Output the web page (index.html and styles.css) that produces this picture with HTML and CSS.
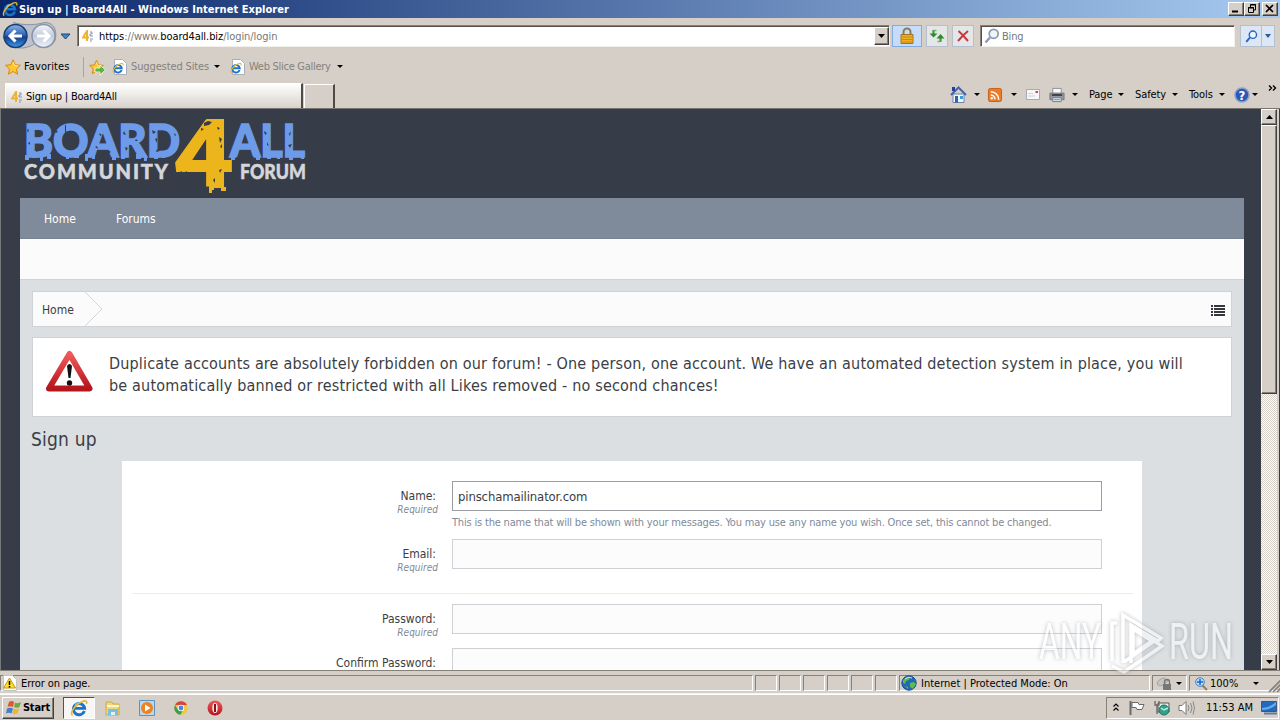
FILE: index.html
```html
<!DOCTYPE html>
<html lang="en">
	<head>
		<meta charset="utf-8">
		<title>Sign up | Board4All</title>
		<link rel="stylesheet" href="styles.css">
	</head>

	<body>
		<svg class="defs" width="0" height="0">
			<defs>
				<linearGradient id="blueBall" x1="0" y1="0" x2="0" y2="1">
					<stop offset="0" stop-color="#8fb4e4"/>
					<stop offset=".45" stop-color="#2f64b4"/>
					<stop offset=".55" stop-color="#123f8e"/>
					<stop offset="1" stop-color="#3f9be8"/>
				</linearGradient>
				<linearGradient id="greyBall" x1="0" y1="0" x2="0" y2="1">
					<stop offset="0" stop-color="#f4f6fa"/>
					<stop offset=".5" stop-color="#c3cbdb"/>
					<stop offset="1" stop-color="#eef3fb"/>
				</linearGradient>
				<linearGradient id="red" x1="0" y1="0" x2="0" y2="1">
					<stop offset="0" stop-color="#f0595c"/>
					<stop offset="1" stop-color="#b3161c"/>
				</linearGradient>
			</defs>
			<symbol id="ie" viewBox="0 0 16 16">
				<path d="M12.8 10.6A5 5 0 1 1 13 8.3H4" fill="none" stroke="#1c74c9" stroke-width="2.6"/>
				<path d="M4.5 6A4 4 0 0 1 9 3.6" fill="none" stroke="#6fc5f5" stroke-width="1.2"/>
				<path d="M2.2 14.6C-.8 12 5.500 4.400 11 2.200c3-1.200 4.500-.4 3.600 2.300" fill="none" stroke="#e9b62c" stroke-width="1.400"/>
			</symbol>
			<symbol id="iepage" viewBox="0 0 16 16">
				<path d="M2.500.5h8l4 4v11h-12z" fill="#fff" stroke="#a9aeb8"/>
				<use href="#ie" x="0" y="3" width="12" height="12"/>
			</symbol>
			<symbol id="star" viewBox="0 0 16 16">
				<path d="M8 .8l2.200 4.900 5.200.6-3.900 3.600 1.100 5.300L8 12.500l-4.600 2.700 1.100-5.300L.6 6.300l5.200-.6z" fill="#fdc62f" stroke="#d98a12"/>
				<path d="M8 3l1.400 3.600 3.600.5" fill="none" stroke="#fff0a0"/>
			</symbol>
			<symbol id="fav4" viewBox="0 0 12 12">
				<path d="M5 11V1L1 7.500h6" fill="none" stroke="#efb42c" stroke-width="2"/>
				<path d="M8 2h2v2H8v2h3M8 9h3M8 11h2" fill="none" stroke="#8393b8"/>
			</symbol>
			<symbol id="lens" viewBox="0 0 16 16">
				<path d="M1.500 14.500L6 9.500" stroke="currentColor" stroke-width="2.400"/>
				<circle cx="9.700" cy="5.800" r="4.500" fill="#eef6fd" stroke="currentColor" stroke-width="1.700"/>
			</symbol>
		</svg>

		<header class="titlebar">
			<svg width="16" height="16"><use href="#ie"/></svg>
			<span class="window-title">Sign up | Board4All - Windows Internet Explorer</span>
			<div class="window-buttons">
				<i class="raised"><svg width="14" height="12"><path d="M3 8.500h6" stroke="#000" stroke-width="2"/></svg></i>
				<i class="raised"><svg width="14" height="12"><path d="M5.500 4V1.500h5V7H8M5 2h6M3.500 4.500h5v5h-5zM3 5h6" fill="none" stroke="#000"/></svg></i>
				<i class="raised close"><svg width="14" height="12"><path d="M3 2l7 7M10 2L3 9" stroke="#000" stroke-width="1.700"/></svg></i>
			</div>
		</header>

		<nav class="navbar">
			<svg class="travel" width="76" height="32">
				<path d="M13 2.500Q29 7 45 2.500c11 0 12 11 10 18-5 9-15 8-18 1-8 9-29 10-34-5" fill="#bcc3ce" stroke="#8b93a2"/>
				<circle cx="15.500" cy="16" r="11.500" fill="url(#blueBall)" stroke="#183d78" stroke-width="1.500"/>
				<path d="M22 16H11M15.500 10.500L10 16l5.500 5.500" fill="none" stroke="#fff" stroke-width="3"/>
				<circle cx="43.500" cy="16" r="11.500" fill="url(#greyBall)" stroke="#8994ac" stroke-width="1.500"/>
				<path d="M37 16h11M43.500 10.500L49 16l-5.500 5.500" fill="none" stroke="#fff" stroke-width="3"/>
				<path d="M61 14h9l-4.500 5z" fill="#3d86c4" stroke="#17487c"/>
			</svg>
			<div class="address sunken">
				<svg width="12" height="12"><use href="#fav4"/></svg>
				<span class="url"><b>https</b>://www.<b>board4all.biz</b>/login/login</span>
				<i class="raised drop"><svg width="7" height="4"><path d="M0 0h7L3.500 4z"/></svg></i>
			</div>
			<i class="tool lock">
				<svg width="16" height="18"><path d="M4.500 8V5a3.500 3.500 0 0 1 7 0v3" fill="none" stroke="#8b7c55" stroke-width="2"/><path d="M2 7.500h12v9H2z" fill="#efae26" stroke="#a97413"/><path d="M3 10h10M3 12.500h10M3 15h10" stroke="#c98a1a"/></svg>
			</i>
			<i class="tool refresh">
				<svg width="16" height="16"><path d="M4.500 2v5M11.500 14V9" fill="none" stroke="#3e9a3a" stroke-width="2.200"/><path d="M4.500 2.500h3M11.500 13.500h-3" stroke="#6db868" stroke-width="1.500"/><path d="M.5 5.500h8L4.500 9.500zM7.500 10.500h8L11.500 6z" fill="#2f8a2e"/></svg>
			</i>
			<i class="tool stop">
				<svg width="14" height="14"><path d="M2.500 2Q7 6 12 12M12 2Q7 6 2 12" fill="none" stroke="#c8393f" stroke-width="2"/></svg>
			</i>
			<div class="search sunken">
				<svg width="16" height="16" color="#8f9aab"><use href="#lens"/></svg>
				<span>Bing</span>
			</div>
			<i class="tool go"><svg width="13" height="13" color="#2264cc"><use href="#lens"/></svg></i>
			<i class="tool more"><svg width="6" height="4"><path d="M0 0h6L3 4z" fill="#235f9f"/></svg></i>
		</nav>

		<nav class="favbar">
			<svg width="16" height="16"><use href="#star"/></svg>
			<span class="favorites">Favorites</span>
			<svg width="17" height="16"><use href="#star" width="15"/><path d="M6 9h5V6l5.500 5-5.500 5v-3H6z" fill="#58b540" stroke="#fff" stroke-width=".8"/></svg>
			<svg class="page-icon" width="16" height="16"><use href="#iepage"/></svg>
			<span class="suggested">Suggested Sites</span>
			<i class="arrow"></i>
			<svg class="page-icon slice" width="16" height="16"><use href="#iepage"/></svg>
			<span class="gallery">Web Slice Gallery</span>
			<i class="arrow"></i>
		</nav>

		<div class="tabrow">
			<div class="tab">
				<svg width="12" height="12"><use href="#fav4"/></svg>
				<span>Sign up | Board4All</span>
			</div>
			<div class="newtab"></div>
			<div class="commands">
				<svg class="home" width="17" height="17"><path d="M3 8h11v8.500H3z" fill="#f4f7fd" stroke="#6f83a9"/><path d="M1 9l7.500-7.500L16 9" fill="none" stroke="#4964a6" stroke-width="2"/><path d="M2 1h3v4H2z" fill="#2a3e99"/><path d="M5 10h3v6.500H5z" fill="#2a65ae"/><path d="M10 10h3v3h-3z" fill="#3c9be0"/></svg>
				<i class="arrow"></i>
				<svg class="feed" width="14" height="14" viewBox="0 0 15 15"><rect x=".5" y=".5" width="14" height="14" rx="2" fill="#ee7c26" stroke="#c55b16"/><path d="M3 7.500a5 5 0 0 1 4.500 4.500M3 4a8.500 8.500 0 0 1 8.500 8.500" fill="none" stroke="#fff" stroke-width="1.600"/><circle cx="4" cy="11" r="1.300" fill="#fff"/></svg>
				<i class="arrow"></i>
				<svg class="mail" width="14" height="11"><path d="M.5.5h13v10H.5z" fill="#f7f7fa" stroke="#a7a9b4"/><path d="M2 4.500h5M2 7h7" stroke="#d0d2da"/><path d="M9.500 2h2.500v2h-2.500z" fill="#d3424f"/></svg>
				<svg class="print" width="16" height="16" viewBox="0 0 17 16"><path d="M4 1h9v6H4z" fill="#f8f8f8" stroke="#8a8d92"/><path d="M1 6h15v7H1z" fill="#9299a2" stroke="#70767f"/><path d="M3 8h11" stroke="#3c4148" stroke-width="2"/><path d="M4 11h9v4H4z" fill="#e8eef1" stroke="#747a82"/><path d="M5 13h7" stroke="#5d9b8d"/></svg>
				<i class="arrow"></i>
				<span class="page">Page</span><i class="arrow"></i>
				<span class="safety">Safety</span><i class="arrow"></i>
				<span class="tools">Tools</span><i class="arrow"></i>
				<svg class="help" width="16" height="16"><circle cx="8" cy="8" r="7" fill="#2c58bb" stroke="#8f9fc4" stroke-width="1.500"/><text x="8" y="12.500" class="qmark">?</text></svg>
				<i class="arrow"></i>
				<svg class="chevrons" width="9" height="6"><path d="M1 .5L3.500 3 1 5.500M5 .5L7.500 3 5 5.500" fill="none" stroke="#000" stroke-width="1.400"/></svg>
			</div>
		</div>

		<div class="viewport">
			<main class="site">
				<svg class="logo" width="300" height="89">
					<g class="logo-blue">
						<text x="4" y="48" textLength="156" lengthAdjust="spacingAndGlyphs">BOARD</text>
						<text x="210" y="48" textLength="75" lengthAdjust="spacingAndGlyphs">ALL</text>
						<path d="M5 46h4v5H5zM12 46h5v3h-5zM20 46h3v6h-3zM27 45h4v5h-4zM46 45h3v5h-3zM54 46h5v3h-5zM65 45h3v7h-3zM72 45h3v5h-3zM92 45h4v6h-4zM101 46h4v4h-4zM116 45h5v5h-5zM124 46h3v6h-3zM134 45h4v5h-4zM142 46h3v3h-3zM211 45h4v6h-4zM236 45h4v6h-4zM247 46h4v4h-4zM257 45h3v5h-3zM269 46h4v5h-4zM281 46h3v4h-3z"/>
					</g>
					<g class="logo-grey">
						<text x="4" y="69.500" textLength="144" lengthAdjust="spacing">COMMUNITY</text>
						<text x="220" y="69.500" textLength="66" lengthAdjust="spacingAndGlyphs">FORUM</text>
					</g>
					<g class="logo-four">
						<text x="152" y="77" textLength="63" lengthAdjust="spacingAndGlyphs">4</text>
						<path d="M189 75h5v6h-2v3h-3zM193 76h11v3h-11zM201 78h5v4h-5z"/>
					</g>
					<path class="scratches" d="M7 20l2 1-1 3zM15 24l3 1-2 3zM8 34l2-1v3zM17 40l2 2-3 1zM36 21l2 2-3 1zM45 16h1v8h-1zM79 24l3 2-2 1zM75 38l2-1 1 3zM88 41l3 2-2 1zM104 22l2 4-3-1zM105 38l3 1-2 3zM116 30l2 2h-3zM132 21l4 2-3 2zM135 30l2-1v5zM137 40l3 2-4 1zM155 24l1 3-2-1zM223 30l3 1-2 2zM228 41l2 1-2 2zM244 22l3 2-2 2zM247 33l2 4-2-1zM267 22l2 3 2-3-1 5zM268 36l4-1-2 4zM184 14l4-2 4 1-3 3-5 1zM181 19l3 1-3 2zM199 28l3 2-2 4zM200 38l2-3v4zM158 64l4-2-1 4zM166 62l4 3-5 1zM177 65l3 2h-3zM199 61l3-1-2 4zM193 71l2-2v5zM197 18l3 1-2 2z"/>
				</svg>

				<nav class="menu">
					<a>Home</a>
					<a>Forums</a>
				</nav>
				<div class="submenu"></div>

				<div class="content">
					<div class="breadcrumb">
						<span>Home</span>
						<svg class="crumb-arrow" width="19" height="34"><path d="M1 0l17 17L1 34" fill="none" stroke="#d2d5d9"/></svg>
						<svg class="list-icon" width="14" height="11"><path d="M0 1h2M3 1h11M0 4h2M3 4h11M0 7h2M3 7h11M0 10h2M3 10h11" stroke="#34373d" stroke-width="2"/></svg>
					</div>

					<div class="notice">
						<svg width="50" height="44"><path d="M24.500 4L44.500 38.500H4z" fill="#fff" stroke="url(#red)" stroke-width="6" stroke-linejoin="round"/><path d="M22 16q2.500-4 5 0l-1.500 12h-2z" fill="#111"/><circle cx="24.500" cy="33" r="2.700" fill="#111"/></svg>
						<p><span>Duplicate accounts are absolutely forbidden on our forum! - One person, one account. We have an automated detection system in place, you will</span><span class="second">be automatically banned or restricted with all Likes removed - no second chances!</span></p>
					</div>

					<h1>Sign up</h1>

					<form class="signup">
						<div class="row name">
							<label><span>Name:</span><em>Required</em></label>
							<div>
								<div class="field focused">pinschamailinator.com</div>
								<p>This is the name that will be shown with your messages. You may use any name you wish. Once set, this cannot be changed.</p>
							</div>
						</div>
						<div class="row email">
							<label><span>Email:</span><em>Required</em></label>
							<div class="field"></div>
						</div>
						<hr>
						<div class="row password">
							<label><span>Password:</span><em>Required</em></label>
							<div class="field"></div>
						</div>
						<div class="row confirm">
							<label><span>Confirm Password:</span></label>
							<div class="field"></div>
						</div>
					</form>
				</div>
			</main>

			<div class="scrollbar">
				<i class="raised"><svg width="7" height="4"><path d="M0 4h7L3.500 0z"/></svg></i>
				<i class="raised thumb"></i>
				<i class="raised bottom"><svg width="7" height="4"><path d="M0 0h7L3.500 4z"/></svg></i>
			</div>
		</div>

		<footer class="status">
			<div class="pane message">
				<svg width="16" height="16"><path d="M1.500.5h9l4 4v11h-13z" fill="#fff" stroke="#c4c4c4"/><path d="M7.500 3l6 10h-12z" fill="#ffdf27" stroke="#c09a10"/><path d="M7.500 6v4M7.500 11v1.500" stroke="#000" stroke-width="1.500"/></svg>
				<span>Error on page.</span>
			</div>
			<div class="pane"></div><div class="pane"></div><div class="pane"></div>
			<div class="pane"></div><div class="pane"></div><div class="pane"></div>
			<div class="pane zone">
				<svg width="16" height="16"><circle cx="8" cy="8" r="7.200" fill="#2367b5" stroke="#1d4d88"/><path d="M2 5q4-4 7-3l-1 3-3 1-1 3-2-1zM9 8l4-1 2 2-3 5-3-2zM4 11l3 1v2z" fill="#58be4d"/><path d="M4 4q3-3 7-1" fill="none" stroke="#c6eafa"/></svg>
				<span>Internet | Protected Mode: On</span>
			</div>
			<div class="pane privacy">
				<svg width="16" height="16"><path d="M1 9q1-5 7-6l4 3-5 4-3 1z" fill="#c6c6c6" stroke="#a4a4a4"/><path d="M8.500 9V7a2.500 2.500 0 0 1 5 0v2" fill="none" stroke="#777" stroke-width="1.400"/><path d="M7 9h8v6H7z" fill="#777"/></svg>
				<i class="arrow"></i>
			</div>
			<div class="pane zoom">
				<svg width="13" height="13"><path d="M7 8l5 5" stroke="#9b7a58" stroke-width="2"/><circle cx="5" cy="5" r="4.300" fill="#b8defa" stroke="#3b83cc"/><path d="M5 2v6M2 5h6" stroke="#1865c1" stroke-width="1.500"/></svg>
				<span>100%</span>
				<i class="arrow"></i>
				<svg class="grip" width="12" height="12"><path d="M0 12L12 0M4 12l8-8M8 12l4-4" stroke="#858078" stroke-width="1.700"/></svg>
			</div>
		</footer>

		<footer class="taskbar">
			<div class="raised start">
				<svg width="16" height="16"><path d="M3 2q3-2 5 0L7 7Q4 5.500 1.500 7z" fill="#e0562f"/><path d="M9 2.500q3 1.500 6-.5l-1.500 5Q11 8.500 8 7z" fill="#69ad3e"/><path d="M1 8.500q3-1.500 6 0l-1.500 5Q3 12 0 13.500z" fill="#3d82cf"/><path d="M7.500 8.500q3 1.500 5.500 0l-1.500 5q-3 1.500-5 0z" fill="#f1b52a"/></svg>
				<b>Start</b>
			</div>
			<div class="active"><svg width="18" height="18"><use href="#ie"/></svg></div>
			<svg class="explorer" width="16" height="16"><path d="M1 2h6l1 2h6v11H1z" fill="#f2d67b" stroke="#c8a94c"/><path d="M2 6h12" stroke="#fff6c5" stroke-width="2"/><path d="M3 9h10v6H3z" fill="#78bfe5"/><path d="M6 12h4v3H6z" fill="#e9eef1"/></svg>
			<svg class="player" width="16" height="16"><path d="M.5.5h15v15H.5z" fill="#b9d8ee" stroke="#5b93c3"/><circle cx="8" cy="8" r="6" fill="#ee8121"/><path d="M6 4.500l5.500 3.500L6 11.500z" fill="#fff"/></svg>
			<svg class="chrome" width="14" height="14"><circle cx="7" cy="7" r="6.700" fill="#f1ca38"/><path d="M1 4a6.700 6.700 0 0 1 12 0H7z" fill="#d84437"/><path d="M1 4a6.700 6.700 0 0 0 5.500 9.700L9 9H4z" fill="#3e9e4d"/><circle cx="7" cy="7" r="3.200" fill="#fff"/><circle cx="7" cy="7" r="2.400" fill="#4b86d8"/></svg>
			<svg class="opera" width="16" height="16"><circle cx="8" cy="8" r="7.500" fill="url(#red)"/><ellipse cx="8" cy="8" rx="2.700" ry="5" fill="#f9eaea"/><path d="M8 4v8" stroke="#8c1015" stroke-width="2"/></svg>
			<div class="tray">
				<svg class="up" width="6" height="9"><path d="M.5 3.500L3 1l2.500 2.500M.5 7.500L3 5l2.500 2.500" fill="none" stroke="#000" stroke-width="1.200"/></svg>
				<svg class="flag" width="16" height="16"><path d="M1.500 1v14" stroke="#696969" stroke-width="2"/><path d="M3 2.500h6l1 2h5l-2 5H8l-1-2H3z" fill="#fff" stroke="#696969"/></svg>
				<svg class="network" width="16" height="16"><path d="M4 3h11v9H4z" fill="#e4eeec" stroke="#555"/><path d="M1 1v4h4V1M3 5v9" fill="none" stroke="#666" stroke-width="1.300"/><circle cx="10" cy="10" r="5" fill="#31a389" stroke="#27705f"/><path d="M7 8l3 2 4-2" fill="none" stroke="#bde9df" stroke-width="1.500"/></svg>
				<svg class="sound" width="17" height="16"><path d="M1 5.500h3l4-4v13l-4-4H1z" fill="#fff" stroke="#777"/><path d="M10 5q2 3 0 6M12.500 3q3 5 0 10M15 1.500q3 6 0 13" fill="none" stroke="#888"/></svg>
				<span class="clock">11:53 AM</span>
				<svg class="desktop" width="16" height="14"><path d="M.5.5h15v10H.5z" fill="#226ac1" stroke="#42567a"/><path d="M1 7Q8 7 15 1v3q-6 5-14 5z" fill="#62acea"/><path d="M3 12.500h13" stroke="#677b95" stroke-width="2"/></svg>
			</div>
		</footer>

		<div class="watermark">
			<svg width="210" height="72">
				<text x="9" y="55" textLength="62" lengthAdjust="spacingAndGlyphs">ANY</text>
				<path d="M82 57V19h5M93 59V11l38 23-3 3-27-16v38M82 62l12 6 38-26-8-5-30 21M103 25l19 12-19 13z" fill="none" stroke="#fff" stroke-width="3.500"/>
				<text x="139" y="55" textLength="64" lengthAdjust="spacingAndGlyphs">RUN</text>
			</svg>
		</div>
	</body>
</html>
```
FILE: styles.css
```css
* {
	box-sizing: border-box;
}

body {
	display: flex;
	flex-direction: column;
	width: 1280px;
	height: 720px;
	margin: 0;
	overflow: hidden;
	background: #d6cfc7;
	color: #000;
	font-family: "DejaVu Sans Condensed", "DejaVu Sans", sans-serif;
	font-stretch: condensed;
	font-size: 11px;
	line-height: 14px;
	white-space: nowrap;
}

svg {
	display: block;
	flex: none;
	overflow: visible;
}

p, h1 {
	margin: 0;
	font-weight: normal;
}

.defs {
	position: absolute;
}

.raised {
	display: flex;
	flex: none;
	align-items: center;
	justify-content: center;
	border: 1px solid #fff;
	border-right-color: #404040;
	border-bottom-color: #404040;
	background: #d6cfc7;
	box-shadow: inset -1px -1px #858078;
}

.sunken {
	display: flex;
	align-items: center;
	border: 1px solid #858078;
	border-right-color: #f3f0ec;
	border-bottom-color: #f3f0ec;
	box-shadow: inset 1px 1px #55524e;
	background: #fff;
}

.arrow {
	flex: none;
	width: 0;
	height: 0;
	border: 3px solid transparent;
	border-top-color: #000;
	border-bottom: 0;
}

/* browser chrome */

.titlebar {
	display: flex;
	flex: none;
	align-items: center;
	height: 18px;
	padding: 0 2px 0 2px;
	background: linear-gradient(90deg, #0a2669, #a6caf0);
	color: #fff;
}

.window-title {
	margin: 1px 0 0 1px;
	font-weight: bold;
	letter-spacing: 0.05px;
}

.window-buttons {
	display: flex;
	margin-left: auto;

	& .raised { width: 16px; height: 14px; }
	& .close { margin-left: 2px; }
}

.navbar {
	display: flex;
	flex: none;
	align-items: center;
	height: 35px;
	border-top: 1px solid #d6cfc7;
}

.travel { margin-top: -1px; }

.address {
	width: 813px;
	height: 22px;
	margin-left: 1px;
	padding-left: 4px;

	& .drop { width: 15px; height: 18px; margin-left: auto; }
}

.url {
	margin: 1px 0 0 5px;
	color: #777;
	letter-spacing: -0.06px;

	& b { color: #000; font-weight: normal; }
}

.tool {
	display: flex;
	align-items: center;
	justify-content: center;
	height: 22px;
	border: 1px solid #b6bfcd;
	background: #e5e6e8;
}

.lock { width: 30px; margin-left: 2px; border-color: #82abe0; background: #c6dcf8; }
.refresh { width: 22px; margin-left: 4px; }
.stop { width: 22px; margin-left: 4px; }
.go { width: 22px; margin-left: 5px; background: #dce6f4; }
.more { width: 13px; border-left: 0; background: #dce6f4; }

.search {
	width: 255px;
	height: 22px;
	margin-left: 6px;
	padding-left: 3px;
	color: #777;

	& span { margin: 1px 0 0 2px; letter-spacing: -0.2px; }
}

.favbar {
	display: flex;
	flex: none;
	align-items: center;
	height: 27px;
	padding-left: 5px;
	color: #85817c;
}

.favorites {
	width: 60px;
	height: 20px;
	margin: 0 5px 0 3px;
	border-right: 1px solid #aaa59e;
	color: #000;
	letter-spacing: 0.1px;
	line-height: 19px;
}

.page-icon { margin-left: 6px; }
.slice { margin-left: 10px; }
.suggested { width: 79px; margin: 1px 4px 0 3px; letter-spacing: -0.12px; }
.gallery { width: 84px; margin: 1px 4px 0 3px; letter-spacing: -0.28px; }

.tabrow {
	display: flex;
	flex: none;
	height: 29px;
	padding-left: 5px;
	border-bottom: 1px solid #77746f;
}

.tab {
	display: flex;
	align-items: center;
	width: 298px;
	height: 25px;
	margin-top: 3px;
	padding: 1px 0 0 5px;
	border-top: 1px solid #fff;
	border-left: 1px solid #fff;
	border-right: 2px solid #4d4a47;
	background: linear-gradient(#fff, #d8d2cb);

	& span { margin-left: 3px; letter-spacing: -0.2px; }
}

.newtab {
	width: 31px;
	height: 24px;
	margin: 4px 0 0 1px;
	border: 1px solid #fff;
	border-right: 2px solid #4d4a47;
	border-bottom: 0;
}

.commands {
	display: flex;
	align-items: center;
	margin-left: 615px;
	padding-top: 1px;

	& span { margin-right: 4px; letter-spacing: -0.1px; }
}

.home { margin-right: 7px; }
.feed { margin: 0 9px 0 8px; }
.mail { margin: 0 9px; }
.print { margin-right: 7px; }
.page { width: 25px; margin-left: 11px; }
.safety { width: 33px; margin-left: 11px; }
.tools { width: 26px; margin-left: 11px; }
.help { margin: 0 2px 0 9px; }
.chevrons { margin: -13px 0 0 10px; }

.qmark {
	fill: #fff;
	font-size: 13px;
	font-weight: bold;
	text-anchor: middle;
}

/* page */

.viewport {
	display: flex;
	flex: none;
	height: 561px;
	border-left: 1px solid #747a7a;
	background: #373d48;
	overflow: hidden;
}

.site {
	width: 1224px;
	margin-left: 19px;
	font-size: 13px;
	line-height: 16px;
}

.logo-blue {
	fill: #6d9bea;
	stroke: #6d9bea;
	stroke-width: 1.6px;
	font: 900 45px Lato, sans-serif;

	& path { stroke: none; }
}

.logo-grey {
	fill: #d4d6da;
	stroke: #d4d6da;
	stroke-width: 0.5px;
	font: 900 20px Lato, sans-serif;
}

.logo-four {
	fill: #edb51c;
	font: 900 95px Roboto, sans-serif;
}

.scratches { fill: #373d48; }

.menu {
	display: flex;
	gap: 40px;
	height: 41px;
	padding: 13px 24px;
	border-bottom: 1px solid #778190;
	background: #7f8a9a;
	color: #fff;
	font-size: 12px;
}

.submenu {
	height: 41px;
	border-bottom: 1px solid #cfd3d6;
	background: #fbfbfb;
}

.content {
	height: 391px;
	padding: 11px 12px 0;
	background: #dbdfe2;
	color: #3b3e45;
}

.breadcrumb {
	display: flex;
	align-items: center;
	height: 36px;
	padding: 0 6px 0 9px;
	border: 1px solid #cfd3d6;
	background: #fbfbfb;

	& span { width: 33px; margin-top: 2px; font-size: 12px; }
}

.crumb-arrow { margin-left: 9px; }
.list-icon { margin: 3px 0 0 auto; }

.notice {
	display: flex;
	height: 80px;
	margin-top: 10px;
	padding: 12px 0 0 12px;
	border: 1px solid #cfd3d6;
	background: #fff;
	font-size: 16px;
	line-height: 22px;
	letter-spacing: 0.174px;

	& p { margin: 3px 0 0 14px; }
	& span { display: block; }
}

h1 {
	margin: 10px 0 10px -1px;
	font-size: 19px;
	letter-spacing: 0.2px;
	line-height: 24px;
}

.signup {
	width: 1020px;
	height: 230px;
	margin-left: 90px;
	padding: 20px 40px 0 0;
	background: #fff;

	& hr {
		height: 1px;
		margin: 0 -31px 10px 10px;
		border: 0;
		background: #ebedef;
	}
}

.row {
	display: flex;
	justify-content: flex-end;

	& label {
		display: flex;
		flex-direction: column;
		align-items: flex-end;
		padding-top: 8px;
		margin-right: 14px;
		font-size: 12px;
		line-height: 15px;
	}

	& label span { margin-right: 2px; }

	& em {
		margin-top: -2px;
		color: #7f8a9a;
		font-size: 10px;
	}

	& p {
		margin-top: 4px;
		color: #7f8a9a;
		font-size: 11px;
		letter-spacing: -0.183px;
	}
}

.name { height: 58px; }
.email { height: 54px; }
.password { height: 44px; }

.field {
	width: 650px;
	height: 30px;
	padding: 7px 5px;
	border: 1px solid #cdd0d4;
	background: #fcfcfc;
	letter-spacing: -0.14px;
}

.focused {
	border-color: #999da2;
	background: #fff;
}

.scrollbar {
	display: flex;
	flex-direction: column;
	width: 16px;
	margin-left: 17px;
	background: repeating-conic-gradient(#fff 0 25%, #d6cfc7 0 50%) 0 0 / 2px 2px;
	box-shadow: 2px 0 #d6cfc7;

	& .raised { height: 16px; }
	& .thumb { height: 269px; }
	& .bottom { margin-top: auto; }
}

/* status bar and taskbar */

.status {
	display: flex;
	flex: none;
	gap: 2px;
	height: 24px;
	padding: 4px 0 2px;
	border-top: 1px solid #858078;
	border-bottom: 1px solid #f6f3f0;

	& span { padding-top: 1px; }
}

.pane {
	display: flex;
	flex: none;
	align-items: center;
	width: 22px;
	border: 1px solid #858078;
	border-right-color: #fff;
	border-bottom-color: #fff;
}

.message { width: 753px; padding-left: 1px; }
.message span { margin-left: 3px; letter-spacing: -0.08px; }
.zone { width: 251px; }
.zone svg { margin-left: 1px; }
.zone span { margin-left: 4px; }
.privacy { width: 35px; padding-left: 3px; }
.privacy .arrow { margin-left: 4px; }

.zoom {
	width: 92px;
	padding-left: 5px;
	border-right: 0;

	& span { width: 31px; margin-left: 2px; }
	& .arrow { margin-left: 12px; }
	& .grip { margin: 5px 0 0 auto; }
}

.taskbar {
	display: flex;
	flex: none;
	align-items: center;
	height: 26px;
	padding-left: 2px;
	border-top: 1px solid #fff;
}

.start {
	width: 52px;
	height: 22px;
	gap: 1px;

	& b { letter-spacing: -0.2px; }
}

.active {
	display: flex;
	align-items: center;
	justify-content: center;
	width: 32px;
	height: 22px;
	margin-left: 9px;
	border: 1px solid #55524e;
	border-right-color: #fff;
	border-bottom-color: #fff;
	background: #f8f6f4;
}

.explorer { margin-left: 10px; }
.player { margin-left: 18px; }
.chrome { margin-left: 19px; }
.opera { margin-left: 19px; }

.tray {
	display: flex;
	align-items: center;
	width: 173px;
	height: 22px;
	margin: 0 1px 0 auto;
	padding-left: 6px;
	border: 1px solid #858078;
	border-right-color: #fff;
	border-bottom-color: #fff;
}

.flag { margin-left: 10px; }
.network { margin-left: 9px; }
.sound { margin-left: 8px; }
.clock { width: 48px; margin-left: 11px; }
.desktop { margin-left: 7px; }

.watermark {
	position: absolute;
	top: 604px;
	left: 1030px;
	opacity: 0.55;
	filter: drop-shadow(0 0 2px #858a92);

	& text {
		fill: #fff;
		font: 50px Roboto, sans-serif;
	}
}
```
